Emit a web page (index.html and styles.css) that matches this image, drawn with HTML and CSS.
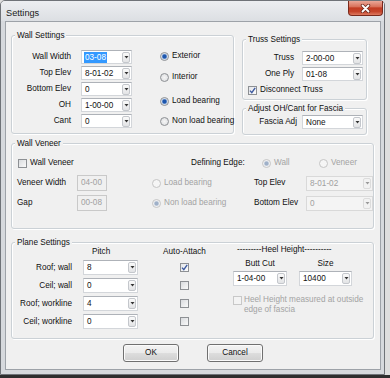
FILE: index.html
```html
<!DOCTYPE html>
<html>
<head>
<meta charset="utf-8">
<link rel="stylesheet" href="styles.css">
</head>
<body>
<div class="window">
  <div class="titlebar">
    <span class="title">Settings</span>
    <div class="close">
      <svg width="13" height="9" viewBox="0 0 13 9"><path d="M3.5 1.5 L9.5 7.5 M9.5 1.5 L3.5 7.5" stroke="#6b2a1f" stroke-width="3.4" stroke-linecap="round"/><path d="M3.5 1.5 L9.5 7.5 M9.5 1.5 L3.5 7.5" stroke="#fff" stroke-width="1.8" stroke-linecap="round"/></svg>
    </div>
  </div>
  <div class="client">
    <div class="top-row">
      <div class="group wall">
        <div class="gtitle">Wall Settings</div>
        <div class="wall-body">
          <div class="wall-grid">
            <span class="lbl">Wall Width</span>
            <div class="combo w51"><span class="val"><span class="sel">03-08</span></span><span class="dd"><svg width="5" height="3" viewBox="0 0 5 3"><path d="M0.5 0 L4.5 0 L2.5 2.6 Z" fill="#333"/></svg></span></div>
            <span class="lbl">Top Elev</span>
            <div class="combo w51"><span class="val">8-01-02</span><span class="dd"><svg width="5" height="3" viewBox="0 0 5 3"><path d="M0.5 0 L4.5 0 L2.5 2.6 Z" fill="#333"/></svg></span></div>
            <span class="lbl">Bottom Elev</span>
            <div class="combo w51"><span class="val">0</span><span class="dd"><svg width="5" height="3" viewBox="0 0 5 3"><path d="M0.5 0 L4.5 0 L2.5 2.6 Z" fill="#333"/></svg></span></div>
            <span class="lbl">OH</span>
            <div class="combo w51"><span class="val">1-00-00</span><span class="dd"><svg width="5" height="3" viewBox="0 0 5 3"><path d="M0.5 0 L4.5 0 L2.5 2.6 Z" fill="#333"/></svg></span></div>
            <span class="lbl">Cant</span>
            <div class="combo w51"><span class="val">0</span><span class="dd"><svg width="5" height="3" viewBox="0 0 5 3"><path d="M0.5 0 L4.5 0 L2.5 2.6 Z" fill="#333"/></svg></span></div>
          </div>
          <div class="wall-radios">
            <div class="ropt"><span class="radio on"></span><span>Exterior</span></div>
            <div class="ropt r2"><span class="radio"></span><span>Interior</span></div>
            <div class="ropt r3"><span class="radio on"></span><span>Load bearing</span></div>
            <div class="ropt r4"><span class="radio"></span><span>Non load bearing</span></div>
          </div>
        </div>
      </div>
      <div class="right-col">
        <div class="group truss">
          <div class="gtitle">Truss Settings</div>
          <div class="truss-grid">
            <span class="lbl">Truss</span>
            <div class="combo w61"><span class="val">2-00-00</span><span class="dd"><svg width="5" height="3" viewBox="0 0 5 3"><path d="M0.5 0 L4.5 0 L2.5 2.6 Z" fill="#333"/></svg></span></div>
            <span class="lbl">One Ply</span>
            <div class="combo w61"><span class="val">01-08</span><span class="dd"><svg width="5" height="3" viewBox="0 0 5 3"><path d="M0.5 0 L4.5 0 L2.5 2.6 Z" fill="#333"/></svg></span></div>
          </div>
          <div class="copt disconnect"><span class="cb on"><svg width="7" height="7" viewBox="0 0 7 7"><path d="M1 3.6 L2.8 5.6 L6.2 0.8" stroke="#3d5aa0" stroke-width="1.4" fill="none"/></svg></span><span>Disconnect Truss</span></div>
        </div>
        <div class="group adjust">
          <div class="gtitle">Adjust OH/Cant for Fascia</div>
          <div class="adjust-grid">
            <span class="lbl">Fascia Adj</span>
            <div class="combo w61"><span class="val">None</span><span class="dd"><svg width="5" height="3" viewBox="0 0 5 3"><path d="M0.5 0 L4.5 0 L2.5 2.6 Z" fill="#333"/></svg></span></div>
          </div>
        </div>
      </div>
    </div>

    <div class="group veneer">
      <div class="gtitle">Wall Veneer</div>
      <div class="vrow vrow1">
        <div class="copt vcell-a"><span class="cb"></span><span>Wall Veneer</span></div>
        <span class="vcell-b">Defining Edge:</span>
        <div class="ropt vcell-c dis"><span class="radio on dis"></span><span>Wall</span></div>
        <div class="ropt dis"><span class="radio dis"></span><span>Veneer</span></div>
      </div>
      <div class="vrow vrow2">
        <span class="vlbl">Veneer Width</span>
        <div class="tbox">04-00</div>
        <div class="ropt vradio dis"><span class="radio dis"></span><span>Load bearing</span></div>
        <span class="vlbl2">Top Elev</span>
        <div class="combo w67 dis"><span class="val">8-01-02</span><span class="dd"><svg width="5" height="3" viewBox="0 0 5 3"><path d="M0.5 0 L4.5 0 L2.5 2.6 Z" fill="#9a9a9a"/></svg></span></div>
      </div>
      <div class="vrow vrow3">
        <span class="vlbl">Gap</span>
        <div class="tbox">00-08</div>
        <div class="ropt vradio dis"><span class="radio on dis"></span><span>Non load bearing</span></div>
        <span class="vlbl2">Bottom Elev</span>
        <div class="combo w67 dis"><span class="val">0</span><span class="dd"><svg width="5" height="3" viewBox="0 0 5 3"><path d="M0.5 0 L4.5 0 L2.5 2.6 Z" fill="#9a9a9a"/></svg></span></div>
      </div>
    </div>

    <div class="group plane">
      <div class="gtitle">Plane Settings</div>
      <div class="plane-body">
        <div class="plane-grid">
          <span></span>
          <span class="ph-pitch">Pitch</span>
          <span class="ph-auto">Auto-Attach</span>

          <span class="lbl">Roof; wall</span>
          <div class="combo w55"><span class="val">8</span><span class="dd"><svg width="5" height="3" viewBox="0 0 5 3"><path d="M0.5 0 L4.5 0 L2.5 2.6 Z" fill="#333"/></svg></span></div>
          <span class="cb on center"><svg width="7" height="7" viewBox="0 0 7 7"><path d="M1 3.6 L2.8 5.6 L6.2 0.8" stroke="#3d5aa0" stroke-width="1.4" fill="none"/></svg></span>

          <span class="lbl">Ceil; wall</span>
          <div class="combo w55"><span class="val">0</span><span class="dd"><svg width="5" height="3" viewBox="0 0 5 3"><path d="M0.5 0 L4.5 0 L2.5 2.6 Z" fill="#333"/></svg></span></div>
          <span class="cb center"></span>

          <span class="lbl">Roof; workline</span>
          <div class="combo w55"><span class="val">4</span><span class="dd"><svg width="5" height="3" viewBox="0 0 5 3"><path d="M0.5 0 L4.5 0 L2.5 2.6 Z" fill="#333"/></svg></span></div>
          <span class="cb center"></span>

          <span class="lbl">Ceil; workline</span>
          <div class="combo w55"><span class="val">0</span><span class="dd"><svg width="5" height="3" viewBox="0 0 5 3"><path d="M0.5 0 L4.5 0 L2.5 2.6 Z" fill="#333"/></svg></span></div>
          <span class="cb center"></span>
        </div>
        <div class="heel">
          <div class="heel-head">---------Heel Height----------</div>
          <div class="heel-labels"><span class="hl1">Butt Cut</span><span class="hl2">Size</span></div>
          <div class="heel-combos">
            <div class="combo w54"><span class="val">1-04-00</span><span class="dd"><svg width="5" height="3" viewBox="0 0 5 3"><path d="M0.5 0 L4.5 0 L2.5 2.6 Z" fill="#333"/></svg></span></div>
            <div class="combo w53"><span class="val">10400</span><span class="dd"><svg width="5" height="3" viewBox="0 0 5 3"><path d="M0.5 0 L4.5 0 L2.5 2.6 Z" fill="#333"/></svg></span></div>
          </div>
          <div class="heel-check"><span class="cb dis"></span><span class="heel-text">Heel Height measured at outside<br>edge of fascia</span></div>
        </div>
      </div>
    </div>

    <div class="buttons">
      <button class="btn">OK</button>
      <button class="btn cancel">Cancel</button>
    </div>
  </div>
</div>
<div class="desk"></div>
</body>
</html>
```

FILE: styles.css
```css
* { box-sizing: border-box; }
html, body { margin: 0; padding: 0; }
body {
  width: 390px;
  height: 378px;
  overflow: hidden;
  background: #dedede;
  font-family: "Liberation Sans", Arial, sans-serif;
  font-size: 8.2px;
  line-height: 10px;
  color: #111;
}
.window {
  width: 385px;
  height: 375px;
  border: 1px solid #6f7378;
  border-radius: 5px 5px 0 0;
  background: #d6d9dd;
  display: flex;
  flex-direction: column;
}
.titlebar {
  height: 20px;
  flex: none;
  display: flex;
  justify-content: space-between;
  align-items: flex-start;
  background: linear-gradient(#eceef1, #dcdfe3);
  border-radius: 4px 4px 0 0;
}
.title {
  font-size: 9.2px;
  line-height: 10px;
  margin: 7px 0 0 5px;
  color: #1a1a1a;
}
.close {
  width: 35px;
  height: 15px;
  margin-right: 1px;
  border: 1px solid #7a2a1c;
  border-top: none;
  border-radius: 0 0 4px 4px;
  background: linear-gradient(#eaa898 0%, #d9735c 40%, #c23c22 50%, #c5452b 75%, #de7a60 100%);
  display: flex;
  align-items: center;
  justify-content: center;
}
.client {
  width: 376px;
  height: 349px;
  margin-left: 4px;
  background: #f0f0f0;
  border: 1px solid #9da2a8;
  display: flex;
  flex-direction: column;
}
.desk { height: 3px; background: #2e2e2e; }

/* group boxes */
.group {
  display: flex;
  flex-direction: column;
  border: 1px solid #cbd1d6;
  border-radius: 3px;
  box-shadow: 1px 1px 0 #fff, inset 1px 1px 0 #fff;
  flex: none;
}
.gtitle {
  align-self: flex-start;
  height: 10px;
  line-height: 10px;
  margin: -5px 0 -5px 3px;
  padding: 0 2px;
  background: #f0f0f0;
  white-space: nowrap;
}
.lbl { justify-self: end; white-space: nowrap; }

/* combos */
.combo {
  display: flex;
  align-items: center;
  height: 14px;
  background: #fff;
  border: 1px solid #d3d6da;
  border-top-color: #aeb2b8;
}
.combo .val {
  flex: 1;
  padding-left: 3px;
  white-space: nowrap;
  overflow: hidden;
  line-height: 11px;
}
.combo .sel {
  display: inline-block;
  background: #3399ff;
  color: #fff;
  padding: 0 1px;
  margin-left: -1px;
  line-height: 11px;
}
.combo .dd {
  flex: none;
  width: 8px;
  height: 11px;
  margin-right: 1px;
  border: 1px solid #c4c7cc;
  border-radius: 2px;
  background: linear-gradient(#fafafa, #e2e3e5);
  display: flex;
  align-items: center;
  justify-content: center;
}
.combo.dis { background: #f4f4f4; border-color: #d9d9d9; color: #a0a0a0; }
.combo.dis .dd { border-color: #dcdcdc; background: #f2f2f2; }
.w51 { width: 51px; }
.w61 { width: 61px; }
.w67 { width: 67px; }
.w55 { width: 55px; }
.w54 { width: 54px; }
.w53 { width: 53px; }

/* radio & checkbox */
.ropt, .copt {
  display: flex;
  align-items: center;
  height: 10px;
  white-space: nowrap;
}
.ropt { gap: 3px; }
.copt { gap: 3px; }
.radio {
  flex: none;
  width: 9px;
  height: 9px;
  border-radius: 50%;
  border: 1px solid #8d9094;
  background: radial-gradient(circle, #f5f5f5 0, #dadcdf 100%);
}
.radio.on {
  background: radial-gradient(circle, #1d56ad 0, #1d56ad 1.6px, #86a8d8 2.4px, #e6e9ee 3.2px);
}
.radio.dis { border-color: #c5c5c5; background: #f5f5f5; }
.radio.on.dis { background: radial-gradient(circle, #9fb0c8 0, #9fb0c8 1.6px, #d5dce6 2.4px, #f5f5f5 3.2px); }
.dis { color: #a3a3a3; }
.cb {
  flex: none;
  width: 9px;
  height: 9px;
  border: 1px solid #8d9094;
  background: linear-gradient(135deg, #d9dbde, #fafafa);
  display: flex;
  align-items: center;
  justify-content: center;
}
.cb.on { background: linear-gradient(135deg, #e4e6ea, #fbfbfb); }
.cb.dis { border-color: #c8c8c8; background: #f3f3f3; }
.cb.center { justify-self: center; }

/* wall settings */
.wall { width: 223px; height: 99px; margin-left: 5px; }
.wall-body { display: flex; margin-top: 14px; }
.wall-grid {
  display: grid;
  grid-template-columns: 59px 51px;
  grid-auto-rows: 14px;
  column-gap: 10px;
  row-gap: 2px;
  align-items: center;
}
.wall-radios {
  display: flex;
  flex-direction: column;
  margin: 1px 0 0 28px;
}
.r2 { margin-top: 11px; }
.r3 { margin-top: 14px; }
.r4 { margin-top: 10px; }

/* right column */
.right-col { display: flex; flex-direction: column; margin: 4px 0 0 8px; }
.top-row { display: flex; align-items: flex-start; margin-top: 13px; flex: none; }
.truss { width: 125px; height: 61px; }
.truss-grid {
  display: grid;
  grid-template-columns: 51px 61px;
  grid-auto-rows: 14px;
  column-gap: 8px;
  row-gap: 2px;
  align-items: center;
  margin-top: 11px;
}
.disconnect { margin: 4px 0 0 5px; }
.adjust { width: 125px; height: 27px; margin-top: 8px; }
.adjust-grid {
  display: grid;
  grid-template-columns: 54px 61px;
  grid-auto-rows: 14px;
  column-gap: 5px;
  align-items: center;
  margin-top: 6px;
}

/* veneer */
.veneer { width: 363px; height: 86px; margin: 8px 0 0 5px; }
.vrow { display: flex; align-items: center; }
.vrow1 { height: 10px; margin-top: 14px; padding-left: 6px; }
.vcell-a { width: 173px; }
.vcell-b { width: 71px; white-space: nowrap; }
.vcell-c { width: 57px; }
.vrow2, .vrow3 { height: 16px; padding-left: 5px; }
.vrow2 { margin-top: 7px; }
.vrow3 { margin-top: 4px; }
.vlbl { width: 60px; white-space: nowrap; }
.tbox {
  width: 30px;
  height: 16px;
  border: 1px solid #c9c9c9;
  background: #f0f0f0;
  color: #a0a0a0;
  padding-left: 3px;
  line-height: 14px;
}
.vradio { width: 102px; margin-left: 45px; }
.vlbl2 { width: 52px; white-space: nowrap; }
.combo.w67 { height: 15px; }

/* plane */
.plane { width: 363px; height: 97px; margin: 13px 0 0 5px; }
.plane-body { display: flex; align-items: flex-start; margin-top: 3px; }
.plane-grid {
  display: grid;
  grid-template-columns: 66px 80px 43px;
  grid-template-rows: 11px repeat(4, 15px);
  row-gap: 3px;
  align-items: center;
  padding-left: 5px;
}
.plane-grid .lbl { padding-right: 11px; }
.plane-grid .combo { height: 15px; }
.ph-pitch { padding-left: 9px; }
.ph-auto { justify-self: center; white-space: nowrap; }
.heel { display: flex; flex-direction: column; width: 128px; margin: -1px 0 0 27px; }
.heel-head { height: 10px; padding-left: 4px; white-space: nowrap; }
.heel-labels { display: flex; height: 10px; margin-top: 4px; }
.hl1 { width: 54px; text-align: center; }
.hl2 { width: 53px; margin-left: 12px; text-align: center; }
.heel-combos { display: flex; gap: 12px; margin-top: 2px; }
.heel-combos .combo { height: 15px; }
.heel-check { display: flex; align-items: flex-start; margin-top: 10px; }
.heel-text { color: #a3a3a3; margin: -1px 0 0 2px; line-height: 10px; white-space: nowrap; }

/* buttons */
.buttons { display: flex; margin-top: 5px; padding-left: 117px; flex: none; }
.btn {
  width: 56px;
  height: 18px;
  padding: 0;
  font: inherit;
  color: #111;
  border: 1px solid #707070;
  border-radius: 3px;
  background: linear-gradient(#f3f3f3 0%, #ebebeb 48%, #dddddd 52%, #cfcfcf 100%);
  box-shadow: inset 0 0 0 1px #fbfbfb;
}
.cancel { margin-left: 28px; }
```
